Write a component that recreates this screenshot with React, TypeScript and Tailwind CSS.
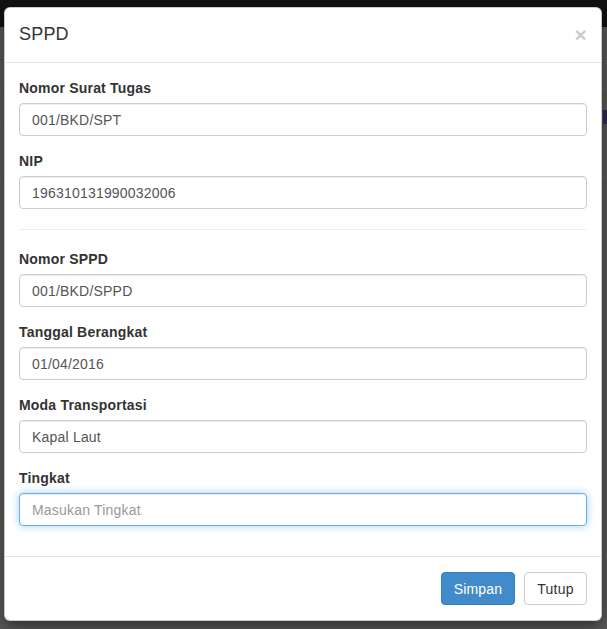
import React from "react";

type Field = {
  label: string;
  value?: string;
  placeholder?: string;
  focused?: boolean;
};

const suratFields: Field[] = [
  { label: "Nomor Surat Tugas", value: "001/BKD/SPT" },
  { label: "NIP", value: "196310131990032006" },
];

const sppdFields: Field[] = [
  { label: "Nomor SPPD", value: "001/BKD/SPPD" },
  { label: "Tanggal Berangkat", value: "01/04/2016" },
  { label: "Moda Transportasi", value: "Kapal Laut" },
  { label: "Tingkat", placeholder: "Masukan Tingkat", focused: true },
];

const FormGroup = ({ field }: { field: Field }) => {
  return (
    <div className="mb-[15px]">
      <label className="block mb-[5px] text-[14px] leading-[20px] font-bold text-[#333]">
        {field.label}
      </label>
      <input
        type="text"
        defaultValue={field.value}
        placeholder={field.placeholder}
        className={`block w-full h-[33px] px-[12px] py-[6px] text-[14px] leading-[19px] tracking-[0.2px] text-[#555] bg-white rounded-[4px] border outline-none placeholder:text-[#999] ${
          field.focused
            ? "border-[#66afe9] shadow-[inset_0_1px_1px_rgba(0,0,0,0.075),0_0_8px_rgba(102,175,233,0.6)]"
            : "border-[#ccc] shadow-[inset_0_1px_1px_rgba(0,0,0,0.075)]"
        }`}
      />
    </div>
  );
};

export default function App() {
  return (
    <div
      className="relative w-full h-[629px] overflow-hidden bg-[#5a5a5a]"
      style={{ fontFamily: '"Liberation Sans", Arial, sans-serif' }}
    >
      {/* page behind the overlay */}
      <div className="h-[27px] bg-[#121212]" />
      <div className="h-[33px] border-b border-[#525252]" />
      <div className="h-[35px] border-b border-[#525252]" />
      <div className="h-[32px] border-b border-[#505050] flex justify-end items-end">
        <div className="w-[4px] h-[14px] mb-[2px] bg-[#2c2c55]" />
      </div>
      <div className="h-[56px] border-b border-[#505050]" />

      {/* modal */}
      <div className="absolute left-[4px] top-[7px] w-[598px] bg-white rounded-[6px] border border-[rgba(0,0,0,0.2)] shadow-[0_5px_15px_rgba(0,0,0,0.5)] tracking-[0.2px]">
        <div className="h-[55px] px-[14px] pt-[13px] border-b border-[#e5e5e5] flex items-start justify-between">
          <h4 className="text-[18px] leading-[26px] text-[#333] font-normal">SPPD</h4>
          <button className="text-[21px] leading-[21px] font-bold text-black opacity-20 mt-[3px] [text-shadow:0_1px_0_#fff]">
            ×
          </button>
        </div>

        <div className="px-[14px] pt-[15px] pb-[15px]">
          {suratFields.map((f) => (
            <FormGroup key={f.label} field={f} />
          ))}
          <hr className="mt-[20px] mb-[19px] border-0 border-t border-[#eee]" />
          {sppdFields.map((f) => (
            <FormGroup key={f.label} field={f} />
          ))}
        </div>

        <div className="px-[14px] pt-[15px] pb-[15px] border-t border-[#e5e5e5] flex justify-end gap-[9px]">
          <button className="h-[33px] w-[74px] text-[14px] leading-[20px] text-white bg-[#428bca] border border-[#357ebd] rounded-[4px]">
            Simpan
          </button>
          <button className="h-[33px] w-[63px] text-[14px] leading-[20px] text-[#333] bg-white border border-[#ccc] rounded-[4px]">
            Tutup
          </button>
        </div>
      </div>
    </div>
  );
}
